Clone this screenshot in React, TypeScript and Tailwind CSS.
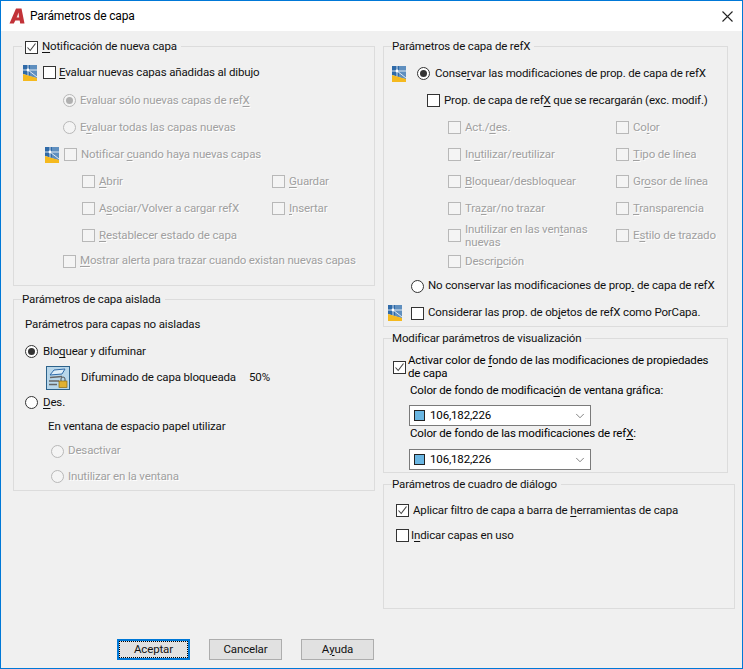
import type { ReactNode } from 'react';
import { ChevronDown } from 'lucide-react';

const U = ({ children }: { children: ReactNode }) => <span className="underline underline-offset-2">{children}</span>;

const LayerIcon = () => (
    <svg width="14" height="16" viewBox="0 0 14 16" className="shrink-0">
        <path d="M0 0H14V13L0 9Z" fill="#2f6aa8" />
        <path d="M7 0H14V13L7 11Z" fill="#5f8fbf" />
        <path d="M0 5H14M5 0V10M5 5L14 12" stroke="#fff" strokeWidth="0.8" fill="none" />
        <circle cx="5" cy="5" r="1.4" fill="#fff" />
        <path d="M0 9L14 13V16H0Z" fill="#f5b91e" />
    </svg>
);

const Check = ({ on, off, className = '' }: { on?: boolean; off?: boolean; className?: string }) => (
    <span
        className={`flex h-[13px] w-[13px] shrink-0 items-center justify-center border ${off ? 'border-[#b8b8b8] bg-[#f4f4f4]' : 'border-[#333333] bg-white'} ${className}`}
    >
        {on && (
            <svg width="11" height="11" viewBox="0 0 11 11">
                <path d="M1.5 5.5L4.2 8.5L9.5 1.5" stroke="#444" strokeWidth="1.1" fill="none" />
            </svg>
        )}
    </span>
);

const Radio = ({ on, off }: { on?: boolean; off?: boolean }) => (
    <span
        className={`flex h-[13px] w-[13px] shrink-0 items-center justify-center rounded-full border ${off ? 'border-[#b8b8b8] bg-[#f4f4f4]' : 'border-[#333333] bg-white'}`}
    >
        {on && <span className={`h-[7px] w-[7px] rounded-full ${off ? 'bg-[#b0b0b0]' : 'bg-[#333333]'}`} />}
    </span>
);

const Row = ({ indent = 0, h = 27, off, children }: { indent?: number; h?: number; off?: boolean; children: ReactNode }) => (
    <div
        className={`flex items-center gap-[4px] whitespace-nowrap ${off ? 'text-[#a0a0a0] [text-shadow:1px_1px_0_#ffffff]' : 'text-[#111111]'}`}
        style={{ paddingLeft: indent, height: h }}
    >
        {children}
    </div>
);

const Group = ({ title, className, children }: { title: ReactNode; className: string; children: ReactNode }) => (
    <div className={`relative border border-[#dcdcdc] ${className}`}>
        <div className="absolute -top-[8px] left-[8px] flex h-[16px] items-center gap-[4px] bg-[#f0f0f0] pr-[4px] text-[#111111]">{title}</div>
        {children}
    </div>
);

const Combo = ({ className }: { className: string }) => (
    <div className={`ml-[25px] flex h-[21px] w-[182px] items-center border border-[#7a7a7a] bg-white pl-[4px] pr-[3px] ${className}`}>
        <span className="h-[11px] w-[11px] border border-[#222222] bg-[#6ab6e2]" />
        <span className="ml-[5px] flex-1">106,182,226</span>
        <ChevronDown className="h-[14px] w-[14px] text-[#555555]" strokeWidth={1.25} />
    </div>
);

const Button = ({ focus, children }: { focus?: boolean; children: ReactNode }) => (
    <div
        className={`flex h-[21px] w-[73px] items-center justify-center bg-[#e1e1e1] ${focus ? 'border-2 border-[#0078d7]' : 'border border-[#adadad]'}`}
    >
        {focus ? (
            <div className="flex h-[17px] w-[69px] items-center justify-center border border-dotted border-black">{children}</div>
        ) : (
            children
        )}
    </div>
);

const props: [ReactNode, ReactNode][] = [
    [<>Act./<U>d</U>es.</>, <>Co<U>l</U>or</>],
    [<>In<U>u</U>tilizar/reutilizar</>, <><U>T</U>ipo de línea</>],
    [<><U>B</U>loquear/desbloquear</>, <>Gr<U>o</U>sor de línea</>],
    [<>Tra<U>z</U>ar/no trazar</>, <><U>T</U>ransparencia</>],
    [<span className="block whitespace-normal leading-[13px]">Inutilizar en las ven<U>t</U>anas nuevas</span>, <>E<U>s</U>tilo de trazado</>],
];

export default function App() {
    return (
        <div className="flex h-[669px] w-[743px] flex-col border border-[#0078d7] bg-[#f0f0f0] text-[11.5px] tracking-[-0.15px] [font-family:Roboto,sans-serif]">
            <div className="flex h-[30px] shrink-0 items-center bg-white pl-[8px] pr-[9px] text-[12px] text-black">
                <svg width="16" height="16" viewBox="0 0 16 16">
                    <path d="M0.5 15.5L7 0.5H12.5L15.5 15.5H11.2L10.7 12.5H6.3L4.8 15.5Z" fill="#c23238" />
                    <path d="M7.6 9.5H10.2L9.6 4.5Z" fill="#f6e3e3" />
                </svg>
                <span className="ml-[5px] flex-1">Parámetros de capa</span>
                <svg width="11" height="11" viewBox="0 0 11 11">
                    <path d="M0.5 0.5L10.5 10.5M10.5 0.5L0.5 10.5" stroke="#222" strokeWidth="1.1" />
                </svg>
            </div>

            <div className="flex flex-1 pl-[12px] pr-[7px] pt-[15px]">
                <div className="w-[370px] shrink-0 pr-[8px]">
                    <Group
                        className="h-[240px] pt-[11px]"
                        title={
                            <>
                                <Check on className="ml-[3px]" />
                                <span><U>N</U>otificación de nueva capa</span>
                            </>
                        }
                    >
                        <Row indent={9} h={29}>
                            <LayerIcon />
                            <Check className="ml-[2px]" />
                            <span className="ml-[-1px]"><U>E</U>valuar nuevas capas añadidas al dibujo</span>
                        </Row>
                        <Row indent={49} off>
                            <Radio on off />
                            <span>Evaluar sólo nuevas capas de ref<U>X</U></span>
                        </Row>
                        <Row indent={49} off>
                            <Radio off />
                            <span>E<U>v</U>aluar todas las capas nuevas</span>
                        </Row>
                        <Row indent={31} off>
                            <LayerIcon />
                            <Check off className="ml-[1px]" />
                            <span>Notificar <U>c</U>uando haya nuevas capas</span>
                        </Row>
                        <div className="flex">
                            <div className="w-[258px]">
                                <Row indent={68} off>
                                    <Check off />
                                    <span><U>A</U>brir</span>
                                </Row>
                                <Row indent={68} off>
                                    <Check off />
                                    <span>A<U>s</U>ociar/Volver a cargar refX</span>
                                </Row>
                            </div>
                            <div>
                                <Row off>
                                    <Check off />
                                    <span><U>G</U>uardar</span>
                                </Row>
                                <Row off>
                                    <Check off />
                                    <span><U>I</U>nsertar</span>
                                </Row>
                            </div>
                        </div>
                        <Row indent={68} off>
                            <Check off />
                            <span><U>R</U>establecer estado de capa</span>
                        </Row>
                        <Row indent={49} h={24} off>
                            <Check off />
                            <span><U>M</U>ostrar alerta para trazar cuando existan nuevas capas</span>
                        </Row>
                    </Group>

                    <Group className="mt-[13px] h-[192px] pt-[11px]" title="Parámetros de capa aislada">
                        <Row indent={11} h={27}>Parámetros para capas no aisladas</Row>
                        <Row indent={11} h={27}>
                            <Radio on />
                            <span className="ml-[1px]">Blo<U>q</U>uear y difuminar</span>
                        </Row>
                        <Row indent={32} h={25}>
                            <svg width="24" height="24" viewBox="0 0 24 24" className="shrink-0">
                                <rect x="0.5" y="0.5" width="23" height="23" fill="#b9d7ea" stroke="#2c628b" />
                                <path d="M8 4L19 3L16 8L4 9Z" fill="#dfeef8" stroke="#2f6aa8" />
                                <path d="M4 11.5L16 10.5M3 15H13M3 18.5H11" stroke="#666" strokeWidth="1.5" />
                                <rect x="13" y="15" width="8" height="6.5" fill="#e0b030" stroke="#8a6a10" strokeWidth="0.7" />
                                <path d="M15 15V13A2 2 0 0 1 19 13V15" stroke="#555" fill="none" />
                            </svg>
                            <span className="ml-[7px] w-[164px] shrink-0">Difuminado de capa bloqueada</span>
                            <span>50%</span>
                        </Row>
                        <Row indent={11} h={25}>
                            <Radio />
                            <span className="ml-[1px]"><U>D</U>es.</span>
                        </Row>
                        <Row indent={34} h={23}>En ventana de espacio papel utilizar</Row>
                        <Row indent={37} h={26} off>
                            <Radio off />
                            <span>Desactivar</span>
                        </Row>
                        <Row indent={37} h={25} off>
                            <Radio off />
                            <span>Inutilizar en la ventana</span>
                        </Row>
                    </Group>
                </div>

                <div className="min-w-0 flex-1">
                    <Group className="mr-[7px] h-[281px] pt-[13px]" title="Parámetros de capa de refX">
                        <Row indent={8}>
                            <LayerIcon />
                            <span className="ml-[7px] flex"><Radio on /></span>
                            <span className="ml-[1px]">Conse<U>r</U>var las modificaciones de prop. de capa de refX</span>
                        </Row>
                        <Row indent={43}>
                            <Check />
                            <span>Prop. de capa de ref<U>X</U> que se recargarán (exc. modif.)</span>
                        </Row>
                        {props.map(([a, b], i) => (
                            <div key={i} className="flex">
                                <div className="w-[232px] shrink-0">
                                    <Row indent={64} off>
                                        <Check off />
                                        <span className="w-[150px]">{a}</span>
                                    </Row>
                                </div>
                                <Row off>
                                    <Check off />
                                    <span>{b}</span>
                                </Row>
                            </div>
                        ))}
                        <Row indent={64} h={25} off>
                            <Check off />
                            <span>Descri<U>p</U>ción</span>
                        </Row>
                        <Row indent={27} h={24}>
                            <Radio />
                            <span>No conservar las modificaciones de prop<U>.</U> de capa de refX</span>
                        </Row>
                        <Row indent={4} h={30}>
                            <LayerIcon />
                            <Check className="ml-[5px]" />
                            <span>Considerar las prop. de ob<U>j</U>etos de refX como PorCapa.</span>
                        </Row>
                    </Group>

                    <Group className="mr-[7px] mt-[11px] h-[135px] pt-[15px]" title="Modificar parámetros de visualización">
                        <div className="flex items-center gap-[2px] pl-[9px] leading-[13px]">
                            <Check on />
                            <span className="w-[310px]">Activar color de <U>f</U>ondo de las modificaciones de propiedades de capa</span>
                        </div>
                        <div className="flex h-[22px] items-center pl-[26px]">Color de fondo de modificaci<U>ó</U>n de ventana gráfica:</div>
                        <Combo className="mt-[3px]" />
                        <div className="flex h-[16px] items-center pl-[26px]">Color de fondo de las modificaciones de ref<U>X</U>:</div>
                        <Combo className="mt-[7px]" />
                    </Group>

                    <Group className="mt-[11px] h-[125px] pt-[13px]" title="Parámetros de cuadro de diálogo">
                        <Row indent={12} h={25}>
                            <Check on />
                            <span>Aplicar filtro de capa a barra de <U>h</U>erramientas de capa</span>
                        </Row>
                        <Row indent={12} h={25}>
                            <Check />
                            <span className="ml-[-2px]">I<U>n</U>dicar capas en uso</span>
                        </Row>
                    </Group>
                </div>
            </div>

            <div className="flex h-[29px] shrink-0 gap-[19px] pl-[116px] text-[#111111]">
                <Button focus>Aceptar</Button>
                <Button>Cancelar</Button>
                <Button>A<U>y</U>uda</Button>
            </div>
        </div>
    );
}
